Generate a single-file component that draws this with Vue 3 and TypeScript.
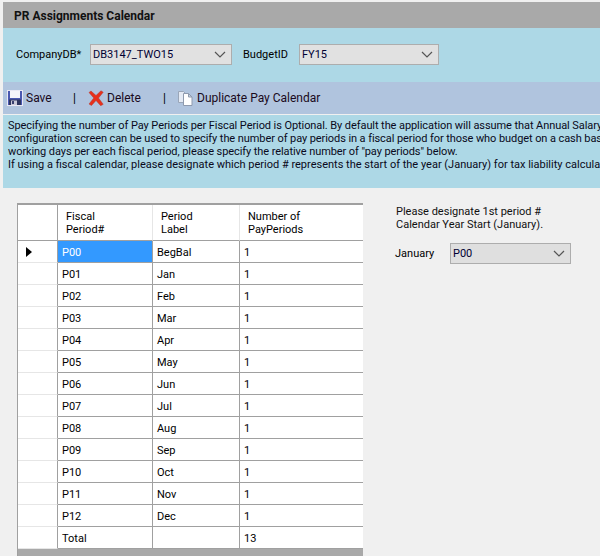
<script setup lang="ts">
const rows: [string, string, string][] = [
  ['P00', 'BegBal', '1'], ['P01', 'Jan', '1'], ['P02', 'Feb', '1'], ['P03', 'Mar', '1'],
  ['P04', 'Apr', '1'], ['P05', 'May', '1'], ['P06', 'Jun', '1'], ['P07', 'Jul', '1'],
  ['P08', 'Aug', '1'], ['P09', 'Sep', '1'], ['P10', 'Oct', '1'], ['P11', 'Nov', '1'],
  ['P12', 'Dec', '1'], ['Total', '', '13'],
]
const notes = [
  'Specifying the number of Pay Periods per Fiscal Period is Optional. By default the application will assume that Annual Salary',
  'configuration screen can be used to specify the number of pay periods in a fiscal period for those who budget on a cash bas',
  'working days per each fiscal period, please specify the relative number of "pay periods" below.',
  'If using a fiscal calendar, please designate which period # represents the start of the year (January) for tax liability calcula',
]
</script>

<template>
  <div class="page">
    <div class="title">PR Assignments Calendar</div>
    <div class="filters">
      <span class="lbl company">CompanyDB*</span>
      <div class="sel sel-company"><span>DB3147_TWO15</span>
        <svg width="12" height="7" viewBox="0 0 12 7"><path d="M1 1l5 5 5-5" fill="none" stroke="#555" stroke-width="1.2"/></svg>
      </div>
      <span class="lbl budget">BudgetID</span>
      <div class="sel sel-budget"><span>FY15</span>
        <svg width="12" height="7" viewBox="0 0 12 7"><path d="M1 1l5 5 5-5" fill="none" stroke="#555" stroke-width="1.2"/></svg>
      </div>
    </div>
    <div class="toolbar">
      <div class="tb-item save">
        <svg width="16" height="16" viewBox="0 0 16 16">
          <rect x="0.500" y="0.500" width="15" height="15" fill="#4a58b0" stroke="#e8e8f4"/>
          <rect x="3" y="1" width="10" height="7" fill="#f4f4fa"/>
          <rect x="2" y="9.500" width="12" height="5.500" fill="#2e3560"/>
          <rect x="4" y="10.500" width="6" height="4.500" fill="#c8c8d8"/>
          <rect x="5" y="11" width="2" height="3" fill="#3a4070"/>
        </svg>
        <span>Save</span>
      </div>
      <span class="tb-sep">|</span>
      <div class="tb-item delete">
        <svg width="16" height="16" viewBox="0 0 16 16">
          <path d="M1 2.500L3 1l5 4.500L13 .8l2.200 1.400L10.500 8l4.700 6.300-2.500 1.400L8 10.500l-4.500 5L1 14l4.800-6z" fill="#e8301c" stroke="#b03a30" stroke-width=".5"/>
        </svg>
        <span>Delete</span>
      </div>
      <span class="tb-sep">|</span>
      <div class="tb-item dup">
        <svg width="16" height="16" viewBox="0 0 16 16">
          <path d="M.5 1.500h5l2 2v9h-7z" fill="#e4eaf4" stroke="#9aa6b8"/>
          <path d="M5.500 3.500h5l3.500 3.500v8.500h-8.500z" fill="#fff" stroke="#8e9aae"/>
          <path d="M10.500 3.500v3.500h3.500z" fill="#c4d0e0" stroke="#8e9aae"/>
        </svg>
        <span>Duplicate Pay Calendar</span>
      </div>
    </div>
    <div class="notes">
      <div v-for="n in notes" :key="n" class="note">{{ n }}</div>
    </div>
    <div class="body">
      <div class="grid">
        <div class="row head">
          <div class="c hdr"></div>
          <div class="c c1 ht">Fiscal<br />Period#</div>
          <div class="c c2 ht">Period<br />Label</div>
          <div class="c c3 ht">Number of<br />PayPeriods</div>
        </div>
        <div v-for="(r, i) in rows" :key="r[0]" class="row">
          <div class="c hdr">
            <svg v-if="i === 0" width="6" height="10" viewBox="0 0 6 10"><path d="M0 0l6 5-6 5z" fill="#000"/></svg>
          </div>
          <div class="c c1" :class="{ active: i === 0 }">{{ r[0] }}</div>
          <div class="c c2">{{ r[1] }}</div>
          <div class="c c3">{{ r[2] }}</div>
        </div>
      </div>
      <div class="side">
        <div class="side-note">Please designate 1st period #<br />Calendar Year Start (January).</div>
        <div class="side-row">
          <span class="lbl side-lbl">January</span>
          <div class="sel sel-jan"><span>P00</span>
            <svg width="12" height="7" viewBox="0 0 12 7"><path d="M1 1l5 5 5-5" fill="none" stroke="#555" stroke-width="1.2"/></svg>
          </div>
        </div>
      </div>
    </div>
  </div>
</template>

<style>
html, body { margin: 0; background: #f0f0f0; }
</style>

<style scoped>
.page {
  width: 600px;
  height: 556px;
  overflow: hidden;
  background: #f0f0f0;
  padding: 2px 0 0 3px;
  box-sizing: border-box;
  font-family: Roboto, "Noto Sans", sans-serif;
  font-size: 11px;
  color: #000;
  white-space: nowrap;
}
.title {
  height: 26px;
  line-height: 28px;
  background: #a9a9a9;
  padding-left: 11px;
  font-weight: 700;
  font-size: 12px;
  color: #111;
}
.filters {
  height: 54px;
  background: #add8e6;
  display: flex;
  align-items: center;
  padding-bottom: 1px;
  box-sizing: border-box;
}
.lbl { display: inline-block; }
.company { margin-left: 13px; width: 74px; }
.budget { margin-left: 11px; width: 56px; }
.sel {
  height: 21px;
  box-sizing: border-box;
  border: 1px solid #adadad;
  background: #e1e1e1;
  display: flex;
  align-items: center;
  justify-content: space-between;
  padding: 0 5px 0 2px;
  color: #000033;
}
.sel-company { width: 142px; }
.sel-budget { width: 140px; }
.toolbar {
  height: 32px;
  background: #b0c4de;
  display: flex;
  align-items: center;
  padding-left: 4px;
  color: #1a0a20;
  font-size: 12px;
}
.tb-item { display: flex; align-items: center; gap: 3px; flex: none; }
.save { width: 66px; }
.delete { width: 75px; margin-left: 14px; }
.dup { margin-left: 14px; }
.tb-sep { width: 1px; flex: none; color: #000; }
.notes {
  height: 73px;
  margin-top: 1px;
  background: #add8e6;
  padding: 4px 0 0 5px;
  box-sizing: border-box;
  overflow: hidden;
}
.note { height: 13px; line-height: 13px; color: #0a0a20; }
.note:nth-child(-n+3) { letter-spacing: -0.08px; }
.body {
  display: flex;
  padding: 15px 0 0 14px;
}
.grid {
  width: 346px;
  height: 353px;
  background: #a9a9a9;
  border: solid #a0a0a0;
  border-width: 2px 0 0 1px;
  box-sizing: border-box;
  flex: none;
}
.row {
  display: flex;
  height: 22px;
  background: #fff;
}
.head { height: 36px; }
.c {
  box-sizing: border-box;
  border-right: 1px solid #a0a0a0;
  border-bottom: 1px solid #a0a0a0;
  padding: 1px 0 0 4px;
  line-height: 21px;
  background: #fff;
  flex: none;
}
.hdr {
  width: 40px;
  border-bottom-color: #e6e6e6;
  display: flex;
  align-items: center;
  padding: 0 0 0 8px;
}
.head .hdr { border-bottom-color: #a0a0a0; }
.c1 { width: 95px; }
.c2 { width: 87px; }
.c3 { width: 123px; border-right: 0; }
.ht {
  line-height: 13px;
  padding: 5px 0 0 8px;
  border-right-color: #e6e6e6;
}
.active { background: #3399ff; color: #fff; }
.side { margin-left: 33px; padding-top: 1px; }
.side-note { line-height: 13px; padding-top: 1px; color: #111; }
.side-row { display: flex; align-items: center; margin-top: 12px; }
.side-lbl { width: 55px; margin-left: -1px; }
.sel-jan { width: 121px; background: #dfdfdf; }
</style>
